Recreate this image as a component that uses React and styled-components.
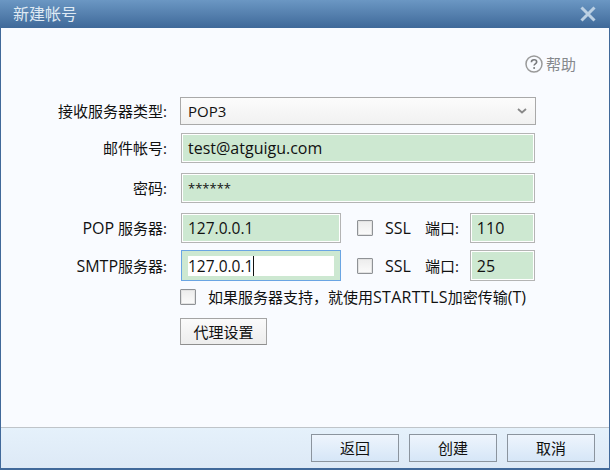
import React from "react"
import styled, { createGlobalStyle } from "styled-components"

const GlobalStyle = createGlobalStyle`
  html, body {
    margin: 0;
    padding: 0;
    background: #f9fbff;
  }
  * {
    box-sizing: border-box;
  }
`

const latinFont = `"Open Sans", "Noto Sans CJK SC", sans-serif`

const Dialog = styled.div`
  width: 610px;
  height: 470px;
  display: flex;
  flex-direction: column;
  background: #f9fbff;
  border-left: 1px solid #41699a;
  border-right: 1px solid #41699a;
  border-bottom: 2px solid #41699a;
  font-family: ${latinFont};
  font-size: 15px;
  line-height: 16px;
  color: #111;
`

const TitleBar = styled.div`
  height: 28px;
  margin: 0 -1px;
  padding: 0 14px 0 13px;
  flex: none;
  display: flex;
  align-items: center;
  justify-content: space-between;
  background: linear-gradient(#6b97c3, #3f6999);
  color: #dfe9f3;
  font-size: 16px;
`

const CloseIcon = styled.svg`
  width: 16px;
  height: 16px;
  display: block;
`

const Body = styled.div`
  flex: 1;
  display: flex;
  flex-direction: column;
  padding-top: 26px;
`

const HelpRow = styled.div`
  height: 20px;
  padding-right: 33px;
  display: flex;
  justify-content: flex-end;
  align-items: center;
  gap: 3px;
  color: #85888c;
`

const Form = styled.div`
  margin-top: 23px;
  display: flex;
  flex-direction: column;
`

const Row = styled.div`
  display: flex;
  align-items: center;
  margin-top: ${(p) => p.$top || 0}px;
`

const Label = styled.div`
  width: 166px;
  flex: none;
  text-align: right;
  white-space: nowrap;
`

const LatinRun = styled.span`
  font-size: 16px;
  letter-spacing: ${(p) => p.$spacing || 0}px;
`

const SelectBox = styled.div`
  width: 356px;
  height: 28px;
  margin-left: 13px;
  padding: 0 8px 0 7px;
  display: flex;
  align-items: center;
  justify-content: space-between;
  border: 1px solid #a9a9a9;
  background: linear-gradient(#fcfcfc, #f1f1f1);
`

const Field = styled.div`
  width: ${(p) => p.$width}px;
  height: ${(p) => p.$height || 30}px;
  margin-left: ${(p) => p.$left || 14}px;
  padding-left: 6px;
  display: flex;
  align-items: center;
  flex: none;
  border: 1px solid ${(p) => (p.$focused ? "#6aa5e3" : "#b4b4b4")};
  background: #cde8d1;
  box-shadow: inset 0 0 0 1px ${(p) => (p.$focused ? "#cde8d1" : "#fff")};
  font-size: ${(p) => p.$size || 15.5}px;
`

const FocusedText = styled.div`
  width: 146px;
  height: 20px;
  display: flex;
  align-items: center;
  background: #fff;
`

const Caret = styled.span`
  width: 1px;
  height: 20px;
  background: #111;
`

const Check = styled.div`
  width: 16px;
  height: 16px;
  flex: none;
  margin-left: ${(p) => p.$left}px;
  border: 1px solid #8f9296;
  border-radius: 1px;
  background: linear-gradient(#ececec, #fbfbfb);
  box-shadow: inset 0 0 0 1px #e2e2e2;
`

const InlineText = styled.div`
  margin-left: ${(p) => p.$left}px;
  white-space: nowrap;
`

const PlainButton = styled.div`
  width: 87px;
  height: 27px;
  margin-left: 179px;
  display: flex;
  align-items: center;
  justify-content: center;
  border: 1px solid #a4a4a4;
  border-bottom-color: #8e8e8e;
  background: linear-gradient(#fafafa, #ededed);
`

const Footer = styled.div`
  height: 41px;
  flex: none;
  padding: 6px 14px 0 0;
  display: flex;
  justify-content: flex-end;
  gap: 10px;
  border-top: 1px solid #bfc4c9;
  background: linear-gradient(#e5f1fb, #dde9f6);
`

const FooterButton = styled.div`
  width: 88px;
  height: 28px;
  display: flex;
  align-items: center;
  justify-content: center;
  border: 1px solid #8b949e;
  background: linear-gradient(#eef5fd, #d6e6f7);
`

const HelpIcon = () => (
  <svg width="18" height="18" viewBox="0 0 18 18" fill="none">
    <circle cx="9" cy="9" r="8" stroke="#9a9a9a" strokeWidth="1.5" />
    <path d="M6.4 7.2c0-1.6 1.2-2.5 2.7-2.5s2.6.9 2.6 2.2c0 1.9-2.6 1.9-2.6 3.6" stroke="#77797c" strokeWidth="1.6" />
    <circle cx="9.1" cy="13" r="1" fill="#77797c" />
  </svg>
)

const Chevron = () => (
  <svg width="10" height="6" viewBox="0 0 10 6" fill="none">
    <path d="M1 1l4 3.5L9 1" stroke="#888" strokeWidth="1.8" />
  </svg>
)

const SslPort = ({ port, height }) => (
  <>
    <Check $left={16} />
    <InlineText $left={12}><LatinRun>SSL</LatinRun></InlineText>
    <InlineText $left={14}>端口:</InlineText>
    <Field $width={65} $height={height} $left={11} $size={16}>{port}</Field>
  </>
)

const App = () => {
  return (
    <Dialog>
      <GlobalStyle />
      <TitleBar>
        <span>新建帐号</span>
        <CloseIcon viewBox="0 0 16 16">
          <path d="M1.5 1.5l13 13M14.5 1.5l-13 13" stroke="#bcd0e3" strokeWidth="3" />
        </CloseIcon>
      </TitleBar>
      <Body>
        <HelpRow>
          <HelpIcon />
          <span>帮助</span>
        </HelpRow>
        <Form>
          <Row>
            <Label>接收服务器类型:</Label>
            <SelectBox>
              <span>POP3</span>
              <Chevron />
            </SelectBox>
          </Row>
          <Row $top={8}>
            <Label>邮件帐号:</Label>
            <Field $width={354} $size={16}>test@atguigu.com</Field>
          </Row>
          <Row $top={10}>
            <Label>密码:</Label>
            <Field $width={354} $size={13}>******</Field>
          </Row>
          <Row $top={10}>
            <Label><LatinRun>POP</LatinRun> 服务器:</Label>
            <Field $width={160}>127.0.0.1</Field>
            <SslPort port="110" />
          </Row>
          <Row $top={7}>
            <Label><LatinRun>SMTP</LatinRun>服务器:</Label>
            <Field $width={160} $height={31} $focused>
              <FocusedText>
                127.0.0.1
                <Caret />
              </FocusedText>
            </Field>
            <SslPort port="25" height={31} />
          </Row>
          <Row $top={8}>
            <Check $left={179} />
            <InlineText $left={12}>
              如果服务器支持，就使用<LatinRun $spacing={0.3}>STARTTLS</LatinRun>加密传输<LatinRun>(T)</LatinRun>
            </InlineText>
          </Row>
          <Row $top={13}>
            <PlainButton>代理设置</PlainButton>
          </Row>
        </Form>
      </Body>
      <Footer>
        <FooterButton>返回</FooterButton>
        <FooterButton>创建</FooterButton>
        <FooterButton>取消</FooterButton>
      </Footer>
    </Dialog>
  )
}

export default App
